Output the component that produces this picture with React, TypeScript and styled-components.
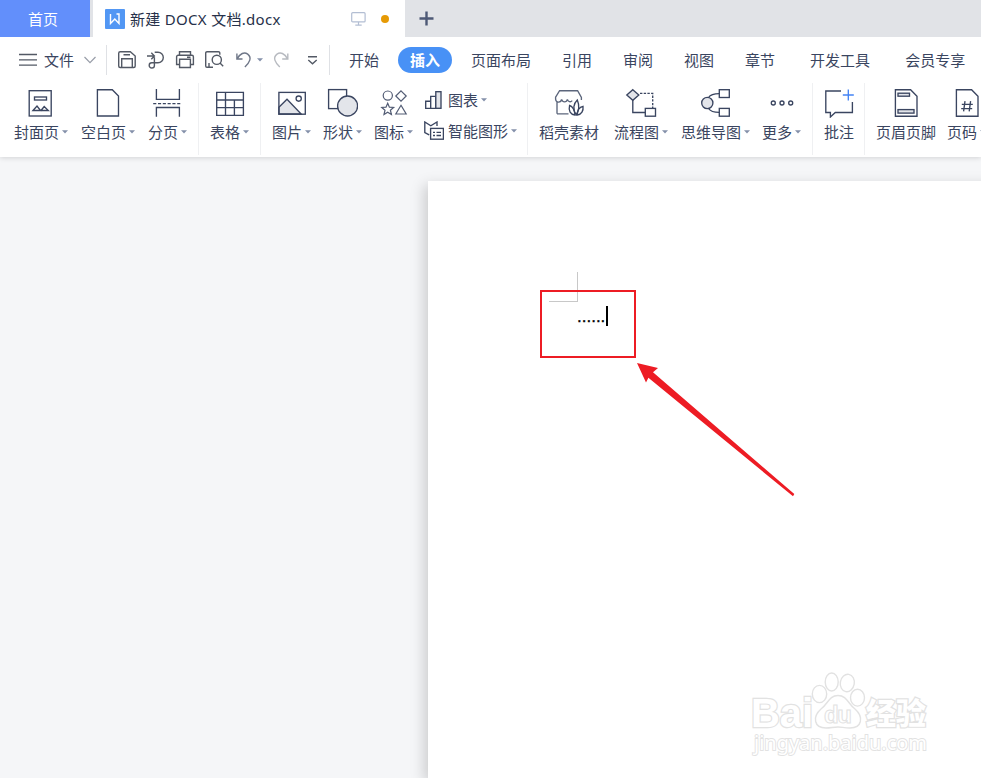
import React from 'react';
import styled, { createGlobalStyle, css } from 'styled-components';

const INK = '#3a4560';
const FILL = '#e3e5ea';
const FONT = '"Noto Sans CJK SC", sans-serif';

const GlobalStyle = createGlobalStyle`
  * { box-sizing: border-box; }
  body { margin: 0; overflow: hidden; }
  svg { display: block; flex: none; }
`;

const Window = styled.div`
  width: 981px;
  height: 778px;
  display: flex;
  flex-direction: column;
  overflow: hidden;
  background: #f5f6f8;
  color: ${INK};
  font: 15px/20px ${FONT};
  white-space: nowrap;
`;

/* Title bar */
const TitleBar = styled.header`
  display: flex;
  flex: none;
  height: 37px;
  background: #e1e3e7;
`;

const HomeTab = styled.div`
  display: flex;
  align-items: center;
  justify-content: center;
  width: 90px;
  padding: 0 4px 0 0;
  margin-right: 3px;
  background: #628ffb;
  color: #fff;
`;

const DocumentTab = styled.div`
  display: flex;
  align-items: center;
  width: 312px;
  padding: 0 16px 0 12px;
  background: #fff;
`;

const DocumentName = styled.span`
  flex: 1;
  margin-left: 5px;
  color: #27314a;
  font-family: "Noto Sans", ${FONT};
  font-size: 15px;
  letter-spacing: 0.3px;
`;

const ModifiedDot = styled.span`
  width: 8px;
  height: 8px;
  margin-left: 15px;
  border-radius: 50%;
  background: #e69a05;
`;

const NewTab = styled.div`
  display: flex;
  align-items: center;
  padding-left: 14px;
`;

/* Menu row */
const MenuRow = styled.nav`
  display: flex;
  flex: none;
  align-items: center;
  position: relative;
  z-index: 1;
  height: 46px;
  background: #fff;
`;

const FileMenu = styled.div`
  display: flex;
  flex: none;
  align-items: center;
  width: 106px;
  padding-left: 18px;
  gap: 6px;
`;

const FileLabel = styled.span`
  width: 34px;
`;

const MenuDivider = styled.span`
  flex: none;
  width: 1px;
  height: 30px;
  background: #dfe1e5;
`;

const QuickActions = styled.div`
  display: flex;
  flex: none;
  align-items: center;
  width: 222px;
  padding-left: 10px;
  gap: 9px;
`;

const UndoGroup = styled.div`
  display: flex;
  align-items: center;
  margin-left: 1px;
  gap: 5px;
`;

const OverflowAction = styled.span`
  margin-left: 8px;
`;

const Tabs = styled.div`
  display: flex;
  flex: none;
  align-items: center;
  padding-left: 7px;
`;

const Tab = styled.span<{ $active?: boolean; $wide?: boolean }>`
  padding: 0 ${(p) => (p.$wide ? '16px' : '12px')};
  margin-right: 7px;
  line-height: 26px;
  ${(p) =>
    p.$active &&
    css`
      border-radius: 13px;
      background: #4891f6;
      color: #fff;
      font-weight: 700;
    `}
`;

/* Ribbon */
const Ribbon = styled.div`
  display: flex;
  flex: none;
  position: relative;
  height: 74px;
  background: #fff;
  box-shadow: 0 1px 5px rgba(0, 0, 0, 0.14);
`;

const Group = styled.div<{ $width: number; $left?: number; $gap?: number }>`
  display: flex;
  flex: none;
  width: ${(p) => p.$width}px;
  padding: 5px 0 0 ${(p) => p.$left ?? 11}px;
  gap: ${(p) => p.$gap ?? 12}px;
`;

const GroupDivider = styled.span`
  flex: none;
  width: 1px;
  height: 72px;
  background: #eff0f2;
`;

const ToolButton = styled.div<{ $trail?: number }>`
  display: flex;
  flex: none;
  flex-direction: column;
  align-items: center;
  gap: 4px;
  margin-right: ${(p) => p.$trail ?? 0}px;
`;

const ToolLabel = styled.span`
  display: flex;
  align-items: center;
  gap: 3px;
`;

const CompactTools = styled.div`
  display: flex;
  flex-direction: column;
  gap: 11px;
  padding-top: 2px;
  margin-left: -1px;
`;

const CompactTool = styled.div`
  display: flex;
  align-items: center;
  height: 20px;
  gap: 4px;
`;

/* Document area */
const Workspace = styled.main`
  flex: 1;
  min-height: 0;
  padding: 24px 0 0 428px;
`;

const Paper = styled.section`
  position: relative;
  width: 600px;
  height: 100%;
  padding: 121px 0 0 149px;
  background: #fff;
  box-shadow: -4px 4px 13px rgba(0, 0, 0, 0.17);
`;

const CropMark = styled.span`
  position: absolute;
  left: 121px;
  top: 91px;
  width: 29px;
  height: 30px;
  border: solid #c8c8c8;
  border-width: 0 1px 1px 0;
`;

const TextLine = styled.div`
  display: flex;
  align-items: flex-start;
  padding-top: 4px;
  color: #000;
  font: 17px/22px "Liberation Sans", Arial, sans-serif;
`;

const Typed = styled.span`
  width: 29px;
  -webkit-text-stroke: 0.3px #000;
`;

const TextCursor = styled.span`
  width: 2px;
  height: 20px;
  background: #000;
`;

const Highlight = styled.span`
  position: absolute;
  left: 112px;
  top: 109px;
  width: 96px;
  height: 68px;
  border: 2px solid #ed1c24;
`;

const Pointer = styled.svg`
  position: absolute;
  left: 208px;
  top: 180px;
`;

const Watermark = styled.svg`
  position: absolute;
  left: 307px;
  top: 479px;
`;

const IconSvg = styled.svg`
  fill: none;
  stroke: ${INK};
  stroke-width: 1.35;
`;

const Caret = () => (
  <svg width="6" height="4" viewBox="0 0 6 4">
    <path d="M0 0.3H6L3 3.5Z" fill="#8490aa" />
  </svg>
);

type Drawing = React.ReactNode;

const icons: Record<string, Drawing> = {
  cover: (
    <>
      <rect x="4.2" y="2.7" width="22" height="25.3" />
      <rect x="9.5" y="9" width="12" height="3" />
      <path d="M8 22.5L12 18L14.7 21.5L16 22.5L19.2 18.5L23.3 22.5Z" />
    </>
  ),
  blank: <path d="M5.4 1.7H20.3L26.5 8V28H5.4Z" />,
  pageBreak: (
    <>
      <path d="M4.4 1V11.4H27.4V1M4.4 28.7V19.5H27.4V28.7" />
      <path d="M1.2 15.6H30" strokeDasharray="3.1 1.7" />
    </>
  ),
  table: <path d="M2.7 4.4H29.4V27.4H2.7ZM2.7 12H29.4M2.7 19.6H29.4M11.5 4.4V27.4M20.4 12V27.4" />,
  picture: (
    <>
      <path d="M2.9 19.2L11 11.2L25.2 26H2.9Z" fill={FILL} />
      <rect x="2.9" y="4.4" width="26.4" height="21.8" />
      <circle cx="22.7" cy="10.6" r="2.6" />
    </>
  ),
  shapes: (
    <>
      <rect x="1.6" y="1.6" width="18" height="19" />
      <circle cx="20.6" cy="18" r="10" fill={FILL} />
    </>
  ),
  glyphs: (
    <g stroke="#525c74" strokeWidth="1.2">
      <circle cx="9.8" cy="7.6" r="4.6" />
      <path d="M23 2.8L28.2 8L23 13.2L17.8 8Z" />
      <path d="M9.7 15.2L11.4 19.2L15.6 19.5L12.4 22.2L13.4 26.5L9.7 24.2L6 26.5L7 22.2L3.8 19.5L8 19.2Z" />
      <path d="M23 17.3L28.2 26H17.8Z" />
    </g>
  ),
  store: (
    <g stroke="#5c667c">
      <path d="M4 25.8V14M4 25.8H15.5M28.4 12V9.4L24.6 2.7H6.6L2.6 9.2V11.2C3 15 8 15 8.6 11.4C9.6 14.7 13.6 14.7 14.4 11.4C15 13.8 17.6 14.6 19.2 12.6" />
      <g stroke={INK}>
        <path d="M23.2 26.8C19.5 21.5 20.3 15.7 24.3 12C26.6 17.5 26.3 22 23.2 26.8Z" />
        <path d="M22 27C17.5 26.5 15.2 23 16.6 17.4C19.3 18.4 21.5 22 22 27Z" />
        <path d="M24.2 27C24.3 22.4 26.3 19.2 30 18.4C30.6 22.6 28.6 26.6 24.2 27Z" />
      </g>
    </g>
  ),
  flow: (
    <>
      <path d="M7.8 12V24.5H20.3" />
      <path d="M7.8 1.7L13.8 7L7.8 12.3L1.8 7Z" fill={FILL} />
      <path d="M15 5.4H27.7V20" strokeDasharray="2.4 1.3" />
      <rect x="20.3" y="20.4" width="10.2" height="7.8" />
    </>
  ),
  mind: (
    <>
      <path d="M8.5 9.5C10.5 6.5 14 5.6 19.3 5.6M8.5 20.5C10.5 23.5 14 24.4 19.3 24.4" />
      <circle cx="7.3" cy="15" r="5.6" fill={FILL} />
      <rect x="19.3" y="1.7" width="10" height="7.8" />
      <rect x="19.3" y="20.4" width="10" height="7.8" />
    </>
  ),
  more: (
    <>
      <circle cx="7.3" cy="15" r="2" />
      <circle cx="16" cy="15" r="2" />
      <circle cx="24.7" cy="15" r="2" />
    </>
  ),
  comment: (
    <>
      <path d="M18 3H2.8V24.5H7.4V29L12.3 24.5H29.4V14" />
      <path d="M25.3 1.5V12.5M19.8 7H30.8" stroke="#4484f5" />
    </>
  ),
  headerFooter: (
    <>
      <path d="M5.4 1.7H20.6L27 8.2V28.2H5.4Z" />
      <rect x="8" y="5.2" width="11.5" height="3" fill={FILL} />
      <rect x="8" y="21.6" width="16" height="3.5" fill={FILL} />
    </>
  ),
  pageNumber: (
    <path d="M5.4 1.7H20.6L27 8.2V28.2H5.4ZM14 13.2L12.6 23.4M19.6 13.2L18.2 23.4M10.8 16.3H21.8M10.2 20.6H21.2" />
  ),
};

type ToolProps = { icon: keyof typeof icons; label: string; odd?: boolean; menu?: boolean; trail?: number };

const Tool = ({ icon, label, odd, menu = true, trail }: ToolProps) => {
  const width = odd ? 31 : 32;
  return (
    <ToolButton $trail={trail}>
      <IconSvg width={width} height="30" viewBox={`0 0 ${width} 30`}>
        {icons[icon]}
      </IconSvg>
      <ToolLabel>
        {label}
        {menu && <Caret />}
      </ToolLabel>
    </ToolButton>
  );
};

const QuickIcon = ({ children, width = 20, color = '#535965' }: { children: Drawing; width?: number; color?: string }) => (
  <svg width={width} height="20" viewBox={`0 0 ${width} 20`} fill="none" stroke={color} strokeWidth="1.4">
    {children}
  </svg>
);

const Title = () => (
  <TitleBar>
    <HomeTab>首页</HomeTab>
    <DocumentTab>
      <svg width="20" height="20" viewBox="0 0 20 20">
        <rect width="20" height="20" rx="1" fill="#5297f4" />
        <path d="M5.5 5V14.5L9.8 10L14 14.5V5H11.5" fill="none" stroke="#fff" strokeWidth="1.4" />
      </svg>
      <DocumentName>新建 DOCX 文档.docx</DocumentName>
      <svg width="15" height="14" viewBox="0 0 15 14" fill="none" stroke="#b3bed3" strokeWidth="1.2">
        <rect x="0.7" y="0.7" width="13.4" height="9.2" rx="1" />
        <path d="M7.5 10V13M4.3 13.2H10.7" />
      </svg>
      <ModifiedDot />
    </DocumentTab>
    <NewTab>
      <svg width="15" height="15" viewBox="0 0 15 15">
        <path d="M7.5 0.5V14.5M0.5 7.5H14.5" stroke="#4d5976" strokeWidth="2.4" />
      </svg>
    </NewTab>
  </TitleBar>
);

const tabs = [
  { label: '开始' },
  { label: '插入', active: true },
  { label: '页面布局' },
  { label: '引用' },
  { label: '审阅' },
  { label: '视图' },
  { label: '章节' },
];

const Menu = () => (
  <MenuRow>
    <FileMenu>
      <svg width="20" height="14" viewBox="0 0 20 14">
        <path d="M1 1.5H19M1 6.8H19M1 12.1H19" stroke="#535965" strokeWidth="1.3" />
      </svg>
      <FileLabel>文件</FileLabel>
      <svg width="12" height="8" viewBox="0 0 12 8">
        <path d="M0.5 1L6 6.7L11.5 1" fill="none" stroke="#989da8" strokeWidth="1.2" />
      </svg>
    </FileMenu>
    <MenuDivider />
    <QuickActions>
      <QuickIcon>
        <path d="M3.2 1.8H13.3L18.2 6V16A1.5 1.5 0 0 1 16.7 17.5H3.2A1.5 1.5 0 0 1 1.7 16V3.3A1.5 1.5 0 0 1 3.2 1.8ZM4.7 17V8.8H15.3V17M6.5 4.8H13" />
      </QuickIcon>
      <QuickIcon>
        <path d="M1 6H8M5.3 2.8L8.4 6L5.3 9.2M8.7 2.2H12A5.2 5.2 0 0 1 12 12.8H5.8A2.6 2.6 0 1 0 8.4 15.4V7.3" />
      </QuickIcon>
      <QuickIcon>
        <path d="M4.5 5.2V1.8H15.5V5.2M4.5 14.5H1.6V6.7A1.5 1.5 0 0 1 3.1 5.2H16.9A1.5 1.5 0 0 1 18.4 6.7V14.5H15.5M4.6 9.3H15.4V17.5H4.6ZM12 7.2H15.5" />
      </QuickIcon>
      <QuickIcon>
        <path d="M9 17.3H3A1.3 1.3 0 0 1 1.7 16V3A1.3 1.3 0 0 1 3 1.7H14.5A1.3 1.3 0 0 1 15.8 3V4.8M16 13L19.2 16.2M5 17V13" />
        <circle cx="12.8" cy="9.8" r="4.6" />
      </QuickIcon>
      <UndoGroup>
        <QuickIcon width={18} color="#6f7788">
          <path d="M2.9 3.5V9H8.5M3.3 8.6C6.2 3.5 10.2 1.6 13.7 4.1C18.2 7.6 15.7 12.5 10.9 17" />
        </QuickIcon>
        <Caret />
      </UndoGroup>
      <QuickIcon width={18} color="#b7bac0">
        <path d="M15.8 3.5V9H10.2M15.4 8.6C12.5 3.5 8.5 1.6 5 4.1C0.5 7.6 3 12.5 7.8 17" />
      </QuickIcon>
      <OverflowAction>
        <QuickIcon width={12}>
          <path d="M1 6.8H10M1.3 10L5.5 13.8L9.7 10" />
        </QuickIcon>
      </OverflowAction>
    </QuickActions>
    <MenuDivider />
    <Tabs>
      {tabs.map((t) => (
        <Tab key={t.label} $active={t.active}>
          {t.label}
        </Tab>
      ))}
      <Tab $wide>开发工具</Tab>
      <Tab>会员专享</Tab>
    </Tabs>
  </MenuRow>
);

const Tools = () => (
  <Ribbon>
    <Group $width={198} $left={14} $gap={13}>
      <Tool icon="cover" label="封面页" />
      <Tool icon="blank" label="空白页" />
      <Tool icon="pageBreak" label="分页" odd />
    </Group>
    <GroupDivider />
    <Group $width={61}>
      <Tool icon="table" label="表格" odd />
    </Group>
    <GroupDivider />
    <Group $width={266}>
      <Tool icon="picture" label="图片" odd />
      <Tool icon="shapes" label="形状" odd />
      <Tool icon="glyphs" label="图标" odd />
      <CompactTools>
        <CompactTool>
          <IconSvg width="20" height="20" viewBox="0 0 20 20">
            <path d="M1.7 11.2H6.7V18.3H1.7ZM6.7 6.3H11.8V18.3H6.7Z" />
            <rect x="11.8" y="1.7" width="5.2" height="16.6" fill={FILL} />
          </IconSvg>
          <ToolLabel>
            图表
            <Caret />
          </ToolLabel>
        </CompactTool>
        <CompactTool>
          <IconSvg width="20" height="20" viewBox="0 0 20 20">
            <path d="M5.2 13.8L0.8 11.5V1L6.8 4.8L13 1V5" />
            <rect x="6.6" y="7.4" width="12.8" height="10.8" />
            <path d="M9 11.4H11M12.5 11.4H17M9 14.5H11M12.5 14.5H17" />
          </IconSvg>
          <ToolLabel>
            智能图形
            <Caret />
          </ToolLabel>
        </CompactTool>
      </CompactTools>
    </Group>
    <GroupDivider />
    <Group $width={284}>
      <Tool icon="store" label="稻壳素材" menu={false} trail={3} />
      <Tool icon="flow" label="流程图" trail={1} />
      <Tool icon="mind" label="思维导图" odd />
      <Tool icon="more" label="更多" odd />
    </Group>
    <GroupDivider />
    <Group $width={51} $left={10}>
      <Tool icon="comment" label="批注" menu={false} />
    </Group>
    <GroupDivider />
    <Group $width={130} $gap={11}>
      <Tool icon="headerFooter" label="页眉页脚" menu={false} />
      <Tool icon="pageNumber" label="页码" odd />
    </Group>
  </Ribbon>
);

const Brand = () => (
  <Watermark width="210" height="105" viewBox="0 0 210 105" fill="#fff" stroke="#e2e2e2" strokeWidth="1.4">
    <g fontFamily='"Liberation Sans", Arial, sans-serif' paintOrder="stroke" strokeWidth="2.4">
      <text x="16" y="66.5" fontSize="40" fontWeight="700" textLength="62">Bai</text>
      <text x="131" y="64" fontSize="30" fontWeight="900" fontFamily={FONT} textLength="60">经验</text>
      <text x="19" y="90" fontSize="20" fontFamily='"Noto Sans", sans-serif' textLength="173" strokeWidth="1.8">jingyan.baidu.com</text>
    </g>
    <ellipse cx="84.5" cy="34" rx="7.2" ry="8.6" />
    <ellipse cx="96.7" cy="22" rx="6.5" ry="9" />
    <ellipse cx="112.3" cy="23" rx="7" ry="8.8" transform="rotate(10 112.3 23)" />
    <ellipse cx="122.5" cy="37.7" rx="7" ry="8.4" />
    <path d="M103 35.5C112 35.5 113 44 120 49C129 57 127 68 115 68C109 68 107 67 103 67C98 67 96 68 91 68C79 68 77 57 86 49C93 44 94 35.5 103 35.5Z" />
    <text x="89" y="62.5" fontSize="24" fontWeight="700" fontFamily='"Liberation Sans", Arial, sans-serif' textLength="28" strokeWidth="1">du</text>
  </Watermark>
);

export default function App() {
  return (
    <>
      <GlobalStyle />
      <Window>
        <Title />
        <Menu />
        <Tools />
        <Workspace>
          <Paper>
            <CropMark />
            <TextLine>
              <Typed>......</Typed>
              <TextCursor />
            </TextLine>
            <Highlight />
            <Pointer width="160" height="138" viewBox="0 0 160 138" fill="#ed1c24">
              <path d="M1 2L22 7L17 11.2L158.3 133L157 135.3L12.4 16.8L10 21.5Z" />
            </Pointer>
            <Brand />
          </Paper>
        </Workspace>
      </Window>
    </>
  );
}
